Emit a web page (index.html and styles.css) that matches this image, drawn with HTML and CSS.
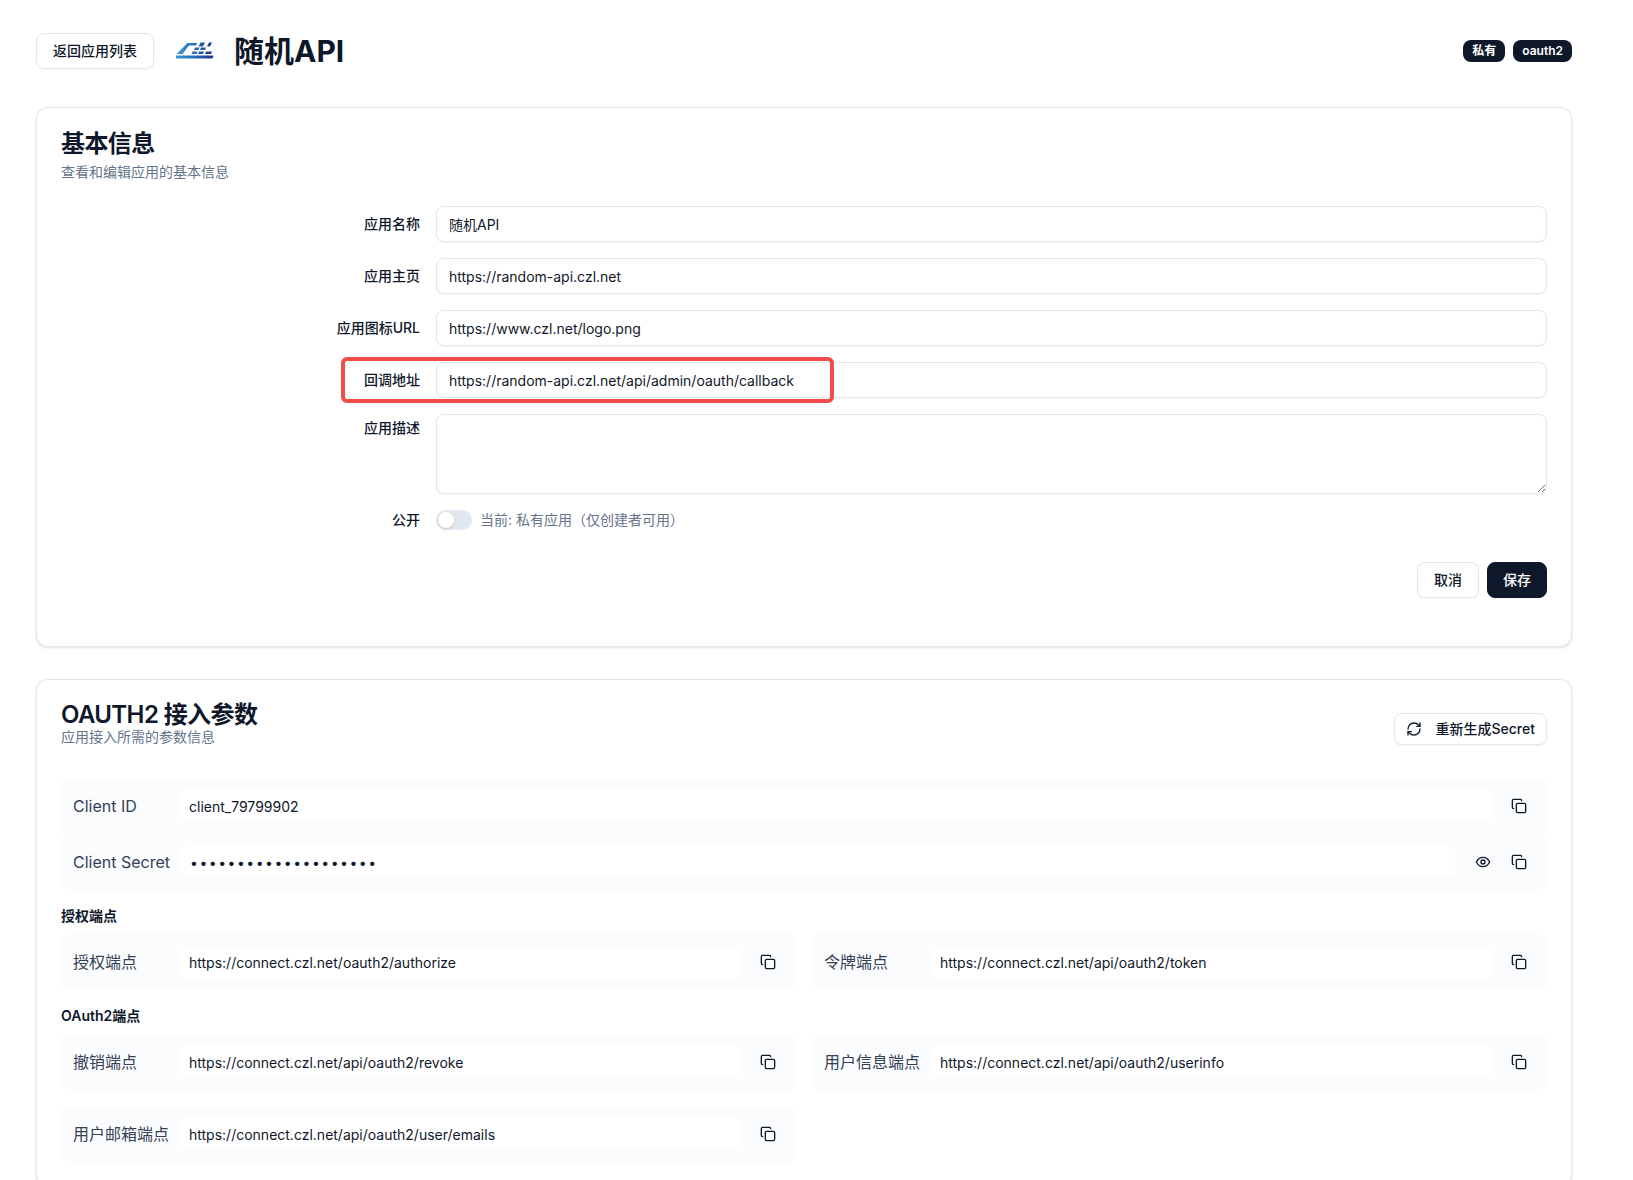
FILE: index.html
```html
<!DOCTYPE html>
<html lang="zh-CN">
<head>
    <meta charset="UTF-8">
    <meta name="viewport" content="width=device-width, initial-scale=1.0">
    <title>随机API</title>
    <link rel="stylesheet" href="styles.css">
</head>
<body>
    <svg class="icon-defs" width="0" height="0" aria-hidden="true">
        <symbol id="icon-copy" viewBox="0 0 24 24">
            <rect x="8" y="8" width="14" height="14" rx="2"></rect>
            <path d="M4 16c-1.100 0-2-.9-2-2V4c0-1.100.9-2 2-2h10c1.100 0 2 .9 2 2"></path>
        </symbol>
    </svg>

    <div class="container">
        <header class="page-header">
            <button class="btn btn-outline">返回应用列表</button>
            <svg class="app-logo" width="48" height="48" viewBox="0 0 48 48" aria-hidden="true">
                <defs>
                    <linearGradient id="logoFill" gradientUnits="userSpaceOnUse" x1="6" y1="0" x2="44" y2="0">
                        <stop offset="0" stop-color="#3b9ad6"></stop>
                        <stop offset="0.55" stop-color="#2468b0"></stop>
                        <stop offset="1" stop-color="#1c2f80"></stop>
                    </linearGradient>
                </defs>
                <g fill="url(#logoFill)">
                    <path d="M17.500 16h9.500l-1 2.500h-7l-6.500 8.500h-6z"></path>
                    <path d="M6 28.500h36.500l1 1.500-1.500 1.500h-36z"></path>
                    <path d="M30.500 15.500h4.500l-2 4h-4.500z"></path>
                    <path d="M39 15.500h3l-2 4h-3z"></path>
                    <path d="M25 20.500h4.500l-1 2.500h-4.500z"></path>
                    <path d="M31 20.500h5l-1 2.500h-5z"></path>
                    <path d="M22.500 24.500h5l-1 2.500h-5z"></path>
                    <path d="M29 24.500h5l-1 2.500h-5z"></path>
                    <path d="M36 24.500h6l-1 2.500h-6z"></path>
                </g>
            </svg>
            <h1 class="app-title">随机API</h1>
            <div class="badges">
                <span class="badge">私有</span>
                <span class="badge">oauth2</span>
            </div>
        </header>

        <section class="card card-basic">
            <h2 class="card-title">基本信息</h2>
            <p class="card-desc">查看和编辑应用的基本信息</p>

            <form class="app-form">
                <label class="form-label">应用名称</label>
                <input class="form-input" type="text" value="随机API">

                <label class="form-label">应用主页</label>
                <input class="form-input" type="text" value="https://random-api.czl.net">

                <label class="form-label">应用图标URL</label>
                <input class="form-input" type="text" value="https://www.czl.net/logo.png">

                <label class="form-label">回调地址</label>
                <div class="callback-field">
                    <input class="form-input" type="text" value="https://random-api.czl.net/api/admin/oauth/callback">
                    <div class="callback-mark"></div>
                </div>

                <label class="form-label label-top">应用描述</label>
                <textarea class="form-input form-textarea"></textarea>

                <label class="form-label">公开</label>
                <div class="switch-field">
                    <span class="switch"><span class="switch-thumb"></span></span>
                    <span class="switch-text">当前: 私有应用（仅创建者可用）</span>
                </div>
            </form>

            <div class="form-actions">
                <button class="btn btn-outline">取消</button>
                <button class="btn btn-primary">保存</button>
            </div>
        </section>

        <section class="card card-params">
            <div class="params-header">
                <div>
                    <h2 class="card-title">OAUTH2 接入参数</h2>
                    <p class="card-desc">应用接入所需的参数信息</p>
                </div>
                <button class="btn btn-outline btn-regen">
                    <svg class="icon" viewBox="0 0 24 24">
                        <path d="M3 12a9 9 0 0 1 9-9 9.750 9.750 0 0 1 6.740 2.740L21 8"></path>
                        <path d="M21 3v5h-5"></path>
                        <path d="M21 12a9 9 0 0 1-9 9 9.750 9.750 0 0 1-6.740-2.740L3 16"></path>
                        <path d="M8 16H3v5"></path>
                    </svg>
                    <span>重新生成Secret</span>
                </button>
            </div>

            <div class="param-row">
                <span class="param-label">Client ID</span>
                <input class="param-value" type="text" readonly value="client_79799902">
                <button class="icon-btn"><svg class="icon"><use href="#icon-copy"></use></svg></button>
            </div>
            <div class="param-row">
                <span class="param-label">Client Secret</span>
                <input class="param-value param-secret" type="password" readonly value="abcdefghijklmnopqrst">
                <button class="icon-btn">
                    <svg class="icon" viewBox="0 0 24 24">
                        <path d="M2 12s3.500-7 10-7 10 7 10 7-3.500 7-10 7-10-7-10-7z"></path>
                        <circle cx="12" cy="12" r="3"></circle>
                    </svg>
                </button>
                <button class="icon-btn"><svg class="icon"><use href="#icon-copy"></use></svg></button>
            </div>

            <h3 class="group-title">授权端点</h3>
            <div class="param-grid">
                <div class="param-row">
                    <span class="param-label">授权端点</span>
                    <input class="param-value" type="text" readonly value="https://connect.czl.net/oauth2/authorize">
                    <button class="icon-btn"><svg class="icon"><use href="#icon-copy"></use></svg></button>
                </div>
                <div class="param-row">
                    <span class="param-label">令牌端点</span>
                    <input class="param-value" type="text" readonly value="https://connect.czl.net/api/oauth2/token">
                    <button class="icon-btn"><svg class="icon"><use href="#icon-copy"></use></svg></button>
                </div>
            </div>

            <h3 class="group-title">OAuth2端点</h3>
            <div class="param-grid">
                <div class="param-row">
                    <span class="param-label">撤销端点</span>
                    <input class="param-value" type="text" readonly value="https://connect.czl.net/api/oauth2/revoke">
                    <button class="icon-btn"><svg class="icon"><use href="#icon-copy"></use></svg></button>
                </div>
                <div class="param-row">
                    <span class="param-label">用户信息端点</span>
                    <input class="param-value" type="text" readonly value="https://connect.czl.net/api/oauth2/userinfo">
                    <button class="icon-btn"><svg class="icon"><use href="#icon-copy"></use></svg></button>
                </div>
                <div class="param-row">
                    <span class="param-label">用户邮箱端点</span>
                    <input class="param-value" type="text" readonly value="https://connect.czl.net/api/oauth2/user/emails">
                    <button class="icon-btn"><svg class="icon"><use href="#icon-copy"></use></svg></button>
                </div>
            </div>
        </section>
    </div>
</body>
</html>
```

FILE: styles.css
```css
:root {
    --primary-color: #0f172a;
    --border-color: #e2e8f0;
    --muted-color: #64748b;
    --row-color: #fbfcfe;
}

* {
    box-sizing: border-box;
    margin: 0;
    padding: 0;
}

body {
    font-family: Inter, "Noto Sans CJK SC", sans-serif;
    font-size: 14px;
    line-height: 20px;
    background-color: white;
    color: var(--primary-color);
}

.icon-defs {
    position: absolute;
}

.container {
    padding: 27px 61px 40px 36px;
}

.page-header {
    display: flex;
    align-items: center;
    gap: 16px;
    margin-bottom: 32px;
}

.app-title {
    font-size: 30px;
    line-height: 36px;
    font-weight: 700;
}

.badges {
    display: flex;
    gap: 8px;
    margin-left: auto;
}

.badge {
    height: 22px;
    padding: 0 9px;
    border-radius: 8px;
    background-color: var(--primary-color);
    color: white;
    font-size: 12px;
    line-height: 22px;
    font-weight: 600;
}

.btn {
    display: inline-flex;
    align-items: center;
    height: 36px;
    padding: 0 16px;
    border: 1px solid var(--border-color);
    border-radius: 8px;
    background: white;
    color: var(--primary-color);
    font: inherit;
    font-weight: 500;
    box-shadow: 0 1px 2px rgba(0,0,0,0.05);
    cursor: pointer;
}

.btn-primary {
    padding: 0 15px;
    background-color: var(--primary-color);
    border-color: var(--primary-color);
    color: white;
}

.btn-regen {
    height: 32px;
    padding: 0 11px;
    gap: 14px;
}

.card {
    padding: 24px;
    border: 1px solid var(--border-color);
    border-radius: 12px;
    background: white;
    box-shadow: 0 1px 3px rgba(0,0,0,0.1), 0 1px 2px -1px rgba(0,0,0,0.1);
}

.card-basic {
    height: 540px;
    margin-bottom: 32px;
}

.card-params {
    padding-top: 23px;
}

.card-title {
    font-size: 24px;
    line-height: 24px;
    font-weight: 600;
    letter-spacing: -0.6px;
}

.card-desc {
    margin-top: 6px;
    color: var(--muted-color);
}

.params-header {
    display: flex;
    align-items: flex-end;
    justify-content: space-between;
    margin-bottom: 31px;
}

.params-header .card-desc {
    margin-top: 0;
}

.params-header .btn-regen {
    margin-bottom: 2px;
}

.app-form {
    display: grid;
    grid-template-columns: 359px 1fr;
    gap: 16px;
    margin-top: 24px;
    align-items: center;
}

.form-label {
    text-align: right;
    font-weight: 500;
}

.label-top {
    align-self: start;
    padding-top: 4px;
}

.form-input {
    display: block;
    width: 100%;
    height: 36px;
    padding: 0 12px;
    border: 1px solid var(--border-color);
    border-radius: 8px;
    background: white;
    color: var(--primary-color);
    font: inherit;
    box-shadow: 0 1px 2px rgba(0,0,0,0.05);
}

.form-textarea {
    height: 80px;
    padding: 8px 12px;
}

.callback-field {
    position: relative;
}

/* red box drawn over the field in the screenshot */
.callback-mark {
    position: absolute;
    left: -95px;
    top: -5px;
    width: 493px;
    height: 46px;
    border: 4px solid #f44b4b;
    border-radius: 6px;
    pointer-events: none;
}

.switch-field {
    display: flex;
    align-items: center;
    gap: 8px;
}

.switch {
    display: flex;
    align-items: center;
    width: 36px;
    height: 20px;
    padding: 2px;
    border-radius: 10px;
    background-color: var(--border-color);
}

.switch-thumb {
    width: 16px;
    height: 16px;
    border-radius: 50%;
    background: white;
    box-shadow: 0 1px 3px rgba(0,0,0,0.15);
}

.switch-text {
    color: var(--muted-color);
}

.form-actions {
    display: flex;
    justify-content: flex-end;
    gap: 8px;
    margin-top: 32px;
}

.param-row {
    display: flex;
    align-items: center;
    padding: 12px;
    border-radius: 8px;
    background-color: var(--row-color);
}

.param-label {
    min-width: 96px;
    margin-right: 12px;
    font-size: 16px;
    line-height: 24px;
    color: #334155;
    white-space: nowrap;
}

.param-value {
    flex: 1;
    min-width: 0;
    height: 32px;
    margin-right: 12px;
    padding: 0 8px;
    border: none;
    border-radius: 6px;
    background: white;
    color: var(--primary-color);
    font: inherit;
    outline: none;
}

.param-secret {
    letter-spacing: 1.5px;
}

.param-value + .icon-btn + .icon-btn {
    margin-left: 4px;
}

.icon-btn {
    display: flex;
    align-items: center;
    justify-content: center;
    width: 32px;
    height: 32px;
    border: none;
    background: none;
    color: var(--primary-color);
    cursor: pointer;
}

.icon {
    width: 16px;
    height: 16px;
    flex-shrink: 0;
    fill: none;
    stroke: currentColor;
    stroke-width: 2;
    stroke-linecap: round;
    stroke-linejoin: round;
}

.group-title {
    margin: 16px 0 8px;
    font-size: 14px;
    line-height: 20px;
    font-weight: 600;
}

.param-grid {
    display: grid;
    grid-template-columns: 1fr 1fr;
    gap: 16px;
}
```
